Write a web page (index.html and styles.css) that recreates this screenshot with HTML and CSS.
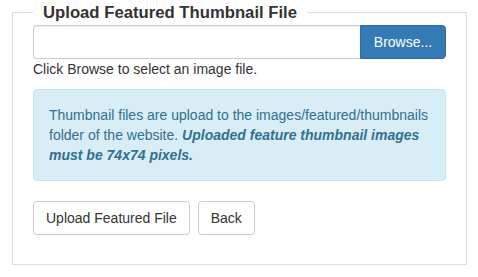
FILE: index.html
```html
<!DOCTYPE html>
<html>
<head>
<meta charset="utf-8">
<link rel="stylesheet" href="styles.css">
</head>
<body>
<fieldset class="panel">
  <legend class="panel-title">Upload Featured Thumbnail File</legend>
  <div class="input-group">
    <input class="file-name" type="text">
    <button class="btn btn-primary" type="button">Browse...</button>
  </div>
  <p class="help">Click Browse to select an image file.</p>
  <div class="alert">Thumbnail files are upload to the images/featured/thumbnails folder of the website. <strong class="em">Uploaded feature thumbnail images must be 74x74 pixels.</strong></div>
  <div class="actions">
    <button class="btn btn-default" type="button">Upload Featured File</button>
    <button class="btn btn-default" type="button">Back</button>
  </div>
</fieldset>
</body>
</html>
```
FILE: styles.css
```css
html, body {
  margin: 0;
  padding: 0;
  background: #fff;
}
body {
  font-family: "Liberation Sans", Arial, sans-serif;
  font-size: 14px;
  line-height: 20px;
  color: #333;
}
.panel {
  margin: 2px 11px 0 12px;
  border: 1px solid #ddd;
  padding: 2px 20px 29px;
  min-width: 0;
}
.panel-title {
  font-size: 16.7px;
  font-weight: bold;
  line-height: 21px;
  padding: 0 10px;
  color: #333;
}
.input-group {
  display: flex;
  height: 34px;
}
.file-name {
  flex: 1;
  min-width: 0;
  box-sizing: border-box;
  height: 34px;
  margin: 0;
  border: 1px solid #ccc;
  border-right: 0;
  border-radius: 4px 0 0 4px;
  box-shadow: inset 0 1px 1px rgba(0,0,0,.075);
  padding: 6px 12px;
  font: inherit;
  outline: none;
}
.btn {
  box-sizing: border-box;
  height: 34px;
  margin: 0;
  padding: 6px 12px;
  font-family: inherit;
  font-size: 14px;
  line-height: 20px;
  border: 1px solid #ccc;
  border-radius: 4px;
  background: #fff;
  color: #333;
  cursor: pointer;
}
.btn-primary {
  width: 86px;
  padding: 6px 0;
  background: #337ab7;
  border-color: #2e6da4;
  color: #fff;
  border-radius: 0 4px 4px 0;
}
.help {
  margin: 0 0 10px;
}
.alert {
  margin: 0 0 20px;
  padding: 15px;
  border: 1px solid #bce8f1;
  border-radius: 4px;
  background: #d9edf7;
  color: #31708f;
}
.em {
  font-style: italic;
  font-weight: bold;
}
.actions {
  display: flex;
  gap: 8px;
}
```
